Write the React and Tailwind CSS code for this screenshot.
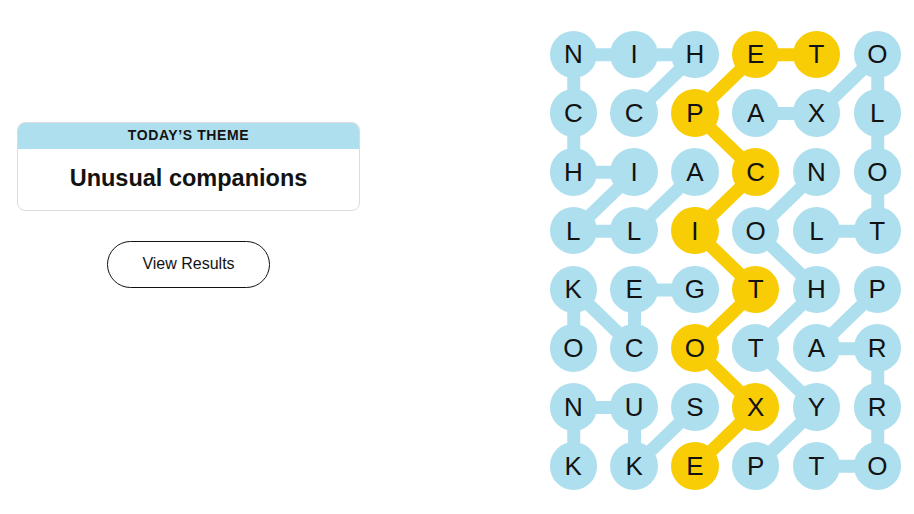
import React from "react";

const rows = ["NIHETO", "CCPAXL", "HIACNO", "LLIOLT", "KEGTHP", "OCOTAR", "NUSXYR", "KKEPTO"];

// cells that belong to the spangram
const gold = ["0-3", "0-4", "1-2", "2-3", "3-2", "4-3", "5-2", "6-3", "7-2"];

const goldLinks = [
  [0, 3, 0, 4], [0, 3, 1, 2], [1, 2, 2, 3], [2, 3, 3, 2],
  [3, 2, 4, 3], [4, 3, 5, 2], [5, 2, 6, 3], [6, 3, 7, 2],
];

const blueLinks = [
  [0, 0, 0, 1], [0, 1, 0, 2], [0, 0, 1, 0], [1, 0, 2, 0], [2, 0, 2, 1],
  [0, 2, 1, 1], [2, 1, 3, 0], [3, 0, 3, 1], [2, 2, 3, 1],
  [0, 5, 1, 4], [1, 3, 1, 4], [0, 5, 1, 5], [1, 5, 2, 5], [2, 5, 3, 5],
  [3, 5, 3, 4], [2, 4, 3, 3], [3, 3, 4, 4], [4, 4, 5, 3], [5, 3, 6, 4],
  [6, 4, 7, 3], [4, 5, 5, 4], [5, 4, 5, 5], [5, 5, 6, 5], [6, 5, 7, 5],
  [7, 4, 7, 5],
  [4, 0, 5, 0], [4, 0, 5, 1], [4, 1, 5, 1], [4, 1, 4, 2],
  [6, 0, 6, 1], [6, 0, 7, 0], [6, 1, 7, 1], [6, 2, 7, 1],
];

const CELL = 47.5;
const PX = 60.8;
const PY = 58.8;
const cx = (c) => CELL / 2 + c * PX;
const cy = (r) => CELL / 2 + r * PY;

function Links({ links, color }) {
  return links.map(([r1, c1, r2, c2], i) => (
    <line
      key={i}
      x1={cx(c1)}
      y1={cy(r1)}
      x2={cx(c2)}
      y2={cy(r2)}
      stroke={color}
      strokeWidth="13"
    />
  ));
}

function Board() {
  return (
    <div className="relative">
      <svg className="absolute inset-0 w-full h-full" width="352" height="460">
        <Links links={blueLinks} color="#aedfee" />
        <Links links={goldLinks} color="#f8cd05" />
      </svg>
      <div className="relative grid grid-cols-[repeat(6,47.5px)] gap-x-[13.3px] gap-y-[11.3px]">
        {rows.map((row, r) =>
          row.split("").map((ch, c) => (
            <button
              key={`${r}-${c}`}
              className={`w-[47.5px] h-[47.5px] rounded-full flex items-center justify-center text-[26px] text-[#121212] leading-none ${
                gold.includes(`${r}-${c}`) ? "bg-[#f8cd05]" : "bg-[#aedfee]"
              }`}
            >
              {ch}
            </button>
          ))
        )}
      </div>
    </div>
  );
}

export default function App() {
  return (
    <div className="w-[914px] h-[514px] bg-white flex justify-between pl-[17px] pr-[13px] pt-[30.5px] font-['Liberation_Sans',Arial,sans-serif]">
      <div className="w-[343px] mt-[91px] flex flex-col items-center">
        <div className="w-full border border-[#dcdcdc] rounded-[8px] overflow-hidden">
          <div className="h-[26px] bg-[#aedfee] flex items-center justify-center text-[14px] font-semibold tracking-[0.6px] text-[#121212]">
            TODAY’S THEME
          </div>
          <div className="h-[61px] flex items-center justify-center text-[23.5px] font-bold text-[#121212]">
            Unusual companions
          </div>
        </div>
        <button className="mt-[30px] w-[163px] h-[47px] rounded-full border border-[#121212] text-[16px] text-[#121212] bg-white">
          View Results
        </button>
      </div>
      <Board />
    </div>
  );
}
